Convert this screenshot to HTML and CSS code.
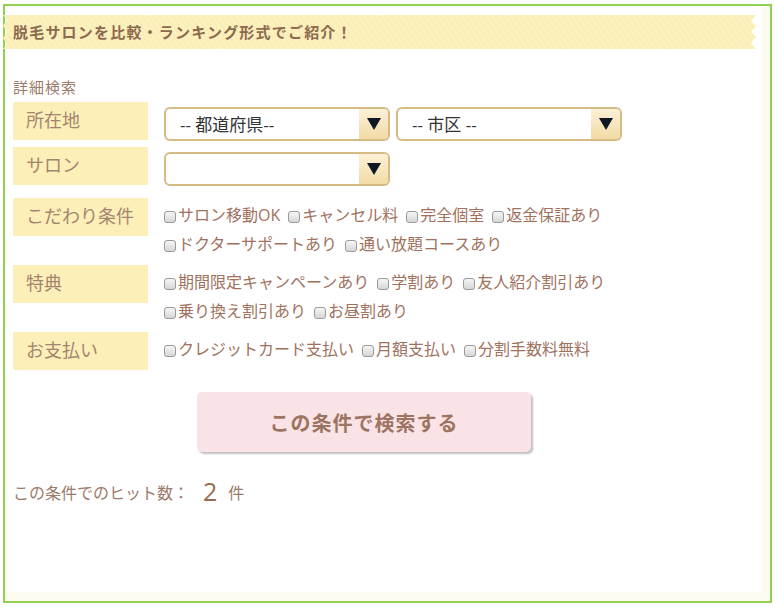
FILE: index.html
```html
<!DOCTYPE html>
<html lang="ja">
<head>
    <meta charset="UTF-8">
    <meta name="viewport" content="width=device-width, initial-scale=1.0">
    <title>脱毛サロン 詳細検索</title>
    <link rel="stylesheet" href="styles.css">
</head>
<body>
    <div class="frame">
        <div class="panel">
            <h2 class="ribbon">脱毛サロンを比較・ランキング形式でご紹介！</h2>

            <!-- 詳細検索 -->
            <form class="search">
                <p class="search-title">詳細検索</p>

                <div class="row">
                    <div class="row-label">所在地</div>
                    <div class="row-body row-selects">
                        <div class="select">
                            <select><option>-- 都道府県--</option></select>
                            <span class="select-arrow"><svg width="14" height="12" viewBox="0 0 14 12"><path d="M0 0 H14 L7 12 Z" fill="#0f1624"/></svg></span>
                        </div>
                        <div class="select">
                            <select><option>-- 市区 --</option></select>
                            <span class="select-arrow"><svg width="14" height="12" viewBox="0 0 14 12"><path d="M0 0 H14 L7 12 Z" fill="#0f1624"/></svg></span>
                        </div>
                    </div>
                </div>

                <div class="row row-salon">
                    <div class="row-label">サロン</div>
                    <div class="row-body row-selects">
                        <div class="select">
                            <select><option></option></select>
                            <span class="select-arrow"><svg width="14" height="12" viewBox="0 0 14 12"><path d="M0 0 H14 L7 12 Z" fill="#0f1624"/></svg></span>
                        </div>
                    </div>
                </div>

                <div class="row">
                    <div class="row-label">こだわり条件</div>
                    <div class="row-body row-options">
                        <label class="opt"><input type="checkbox">サロン移動OK</label>
                        <label class="opt"><input type="checkbox">キャンセル料</label>
                        <label class="opt"><input type="checkbox">完全個室</label>
                        <label class="opt"><input type="checkbox">返金保証あり</label>
                        <label class="opt"><input type="checkbox">ドクターサポートあり</label>
                        <label class="opt"><input type="checkbox">通い放題コースあり</label>
                    </div>
                </div>

                <div class="row">
                    <div class="row-label">特典</div>
                    <div class="row-body row-options">
                        <label class="opt"><input type="checkbox">期間限定キャンペーンあり</label>
                        <label class="opt"><input type="checkbox">学割あり</label>
                        <label class="opt"><input type="checkbox">友人紹介割引あり</label>
                        <label class="opt"><input type="checkbox">乗り換え割引あり</label>
                        <label class="opt"><input type="checkbox">お昼割あり</label>
                    </div>
                </div>

                <div class="row">
                    <div class="row-label">お支払い</div>
                    <div class="row-body row-options">
                        <label class="opt"><input type="checkbox">クレジットカード支払い</label>
                        <label class="opt"><input type="checkbox">月額支払い</label>
                        <label class="opt"><input type="checkbox">分割手数料無料</label>
                    </div>
                </div>

                <div class="search-action">
                    <button type="button" class="search-btn">この条件で検索する</button>
                </div>

                <p class="hits">この条件でのヒット数：<span class="hits-num">2</span><span class="hits-unit">件</span></p>
            </form>
        </div>
    </div>
</body>
</html>
```

FILE: styles.css
```css
body {
    margin: 0;
    padding: 0;
    background-color: #fff;
    font-family: "Noto Sans CJK JP", sans-serif;
    color: #9b7b6b;
}
.frame {
    box-sizing: border-box;
    width: 769px;
    height: 599px;
    margin: 4px 0 0 3px;
    padding: 0 8px 9px 0;
    border: 2px solid #92d050;
    background-color: #fdfaf0; /* fundo creme nas bordas */
}
.panel {
    height: 100%;
    padding-top: 9px;
    background-color: #fff;
    box-sizing: border-box;
}

/* Faixa do título */
.ribbon {
    width: 753px;
    height: 34px;
    margin: 0 0 0 -2px;
    padding-left: 10px;
    box-sizing: border-box;
    font-size: 15px;
    font-weight: bold;
    letter-spacing: 1.2px;
    line-height: 34px;
    color: #8c6a4f;
    background-color: #fbefba;
    background-image: repeating-linear-gradient(55deg, rgba(255, 255, 255, 0.18) 0 1px, rgba(245, 228, 160, 0.18) 1px 3px, rgba(255, 255, 255, 0) 3px 5px);
    clip-path: polygon(0 0, 4px 5px, 0 11px, 4px 17px, 0 23px, 4px 29px, 0 34px,
        100% 34px, calc(100% - 5px) 28px, 100% 22px, calc(100% - 5px) 17px, 100% 11px, calc(100% - 5px) 6px, 100% 0);
}

.search {
    padding-left: 8px;
}
.search-title {
    margin: 28px 0 5px;
    font-size: 15px;
    line-height: 20px;
    letter-spacing: 1px;
    color: #9b7b6b;
}

.row {
    display: flex;
    align-items: flex-start;
    margin-bottom: 6px;
}
.row-salon {
    margin-bottom: 12px;
}
.row-label {
    flex: none;
    width: 135px;
    height: 38px;
    padding-left: 13px;
    box-sizing: border-box;
    background-color: #fcf0b8;
    font-size: 18px;
    line-height: 34px;
    color: #a48470;
}
.row-body {
    margin-left: 16px;
}

/* Selects */
.row-selects {
    display: flex;
    gap: 6px;
    padding-top: 5px;
}
.select {
    position: relative;
    width: 226px;
    height: 34px;
    box-sizing: border-box;
    border: 2px solid #d6bb85;
    border-radius: 6px;
    background-color: #fff;
    overflow: hidden;
}
.select select {
    appearance: none;
    -webkit-appearance: none;
    width: 100%;
    height: 100%;
    padding: 0 0 0 14px;
    border: none;
    background: transparent;
    font-family: "Open Sans", "Noto Sans CJK JP", sans-serif;
    font-size: 17px;
    color: #333;
    outline: none;
}
.select-arrow {
    position: absolute;
    top: 0;
    right: 0;
    bottom: 0;
    width: 29px;
    display: flex;
    align-items: center;
    justify-content: center;
    background: linear-gradient(#fcf1d8, #f2dba4);
    pointer-events: none;
}

/* Checkboxes */
.row-options {
    width: 460px;
    padding-top: 3px;
    display: flex;
    flex-wrap: wrap;
    column-gap: 8px;
    font-size: 16px;
    line-height: 29px;
    color: #a0725e;
}
.opt {
    display: flex;
    align-items: center;
    white-space: nowrap;
    font-family: "Open Sans", "Noto Sans CJK JP", sans-serif;
}
.opt input {
    appearance: none;
    -webkit-appearance: none;
    width: 12px;
    height: 12px;
    margin: 2px 2px 0 0;
    border: 1px solid #9a9a9a;
    border-radius: 3px;
    background: linear-gradient(#f6f6f6, #d6d6d6);
    box-sizing: border-box;
}

/* Botão */
.search-action {
    margin: 22px 0 0 184px;
}
.search-btn {
    width: 334px;
    height: 60px;
    border: none;
    border-radius: 5px;
    background-color: #fae3e6;
    box-shadow: 2px 2px 2px rgba(0, 0, 0, 0.25);
    font-family: "Noto Sans CJK JP", sans-serif;
    font-size: 20px;
    font-weight: bold;
    letter-spacing: 1px;
    color: #9c7462;
    cursor: pointer;
}

.hits {
    margin: 24px 0 0;
    font-size: 16px;
    line-height: 30px;
    color: #9b7b6b;
}
.hits-num {
    margin: 0 11px 0 14px;
    font-family: "Open Sans", sans-serif;
    font-size: 25px;
    color: #9a6a50;
    vertical-align: -2px;
}
.hits-unit {
    font-size: 16px;
}
```
